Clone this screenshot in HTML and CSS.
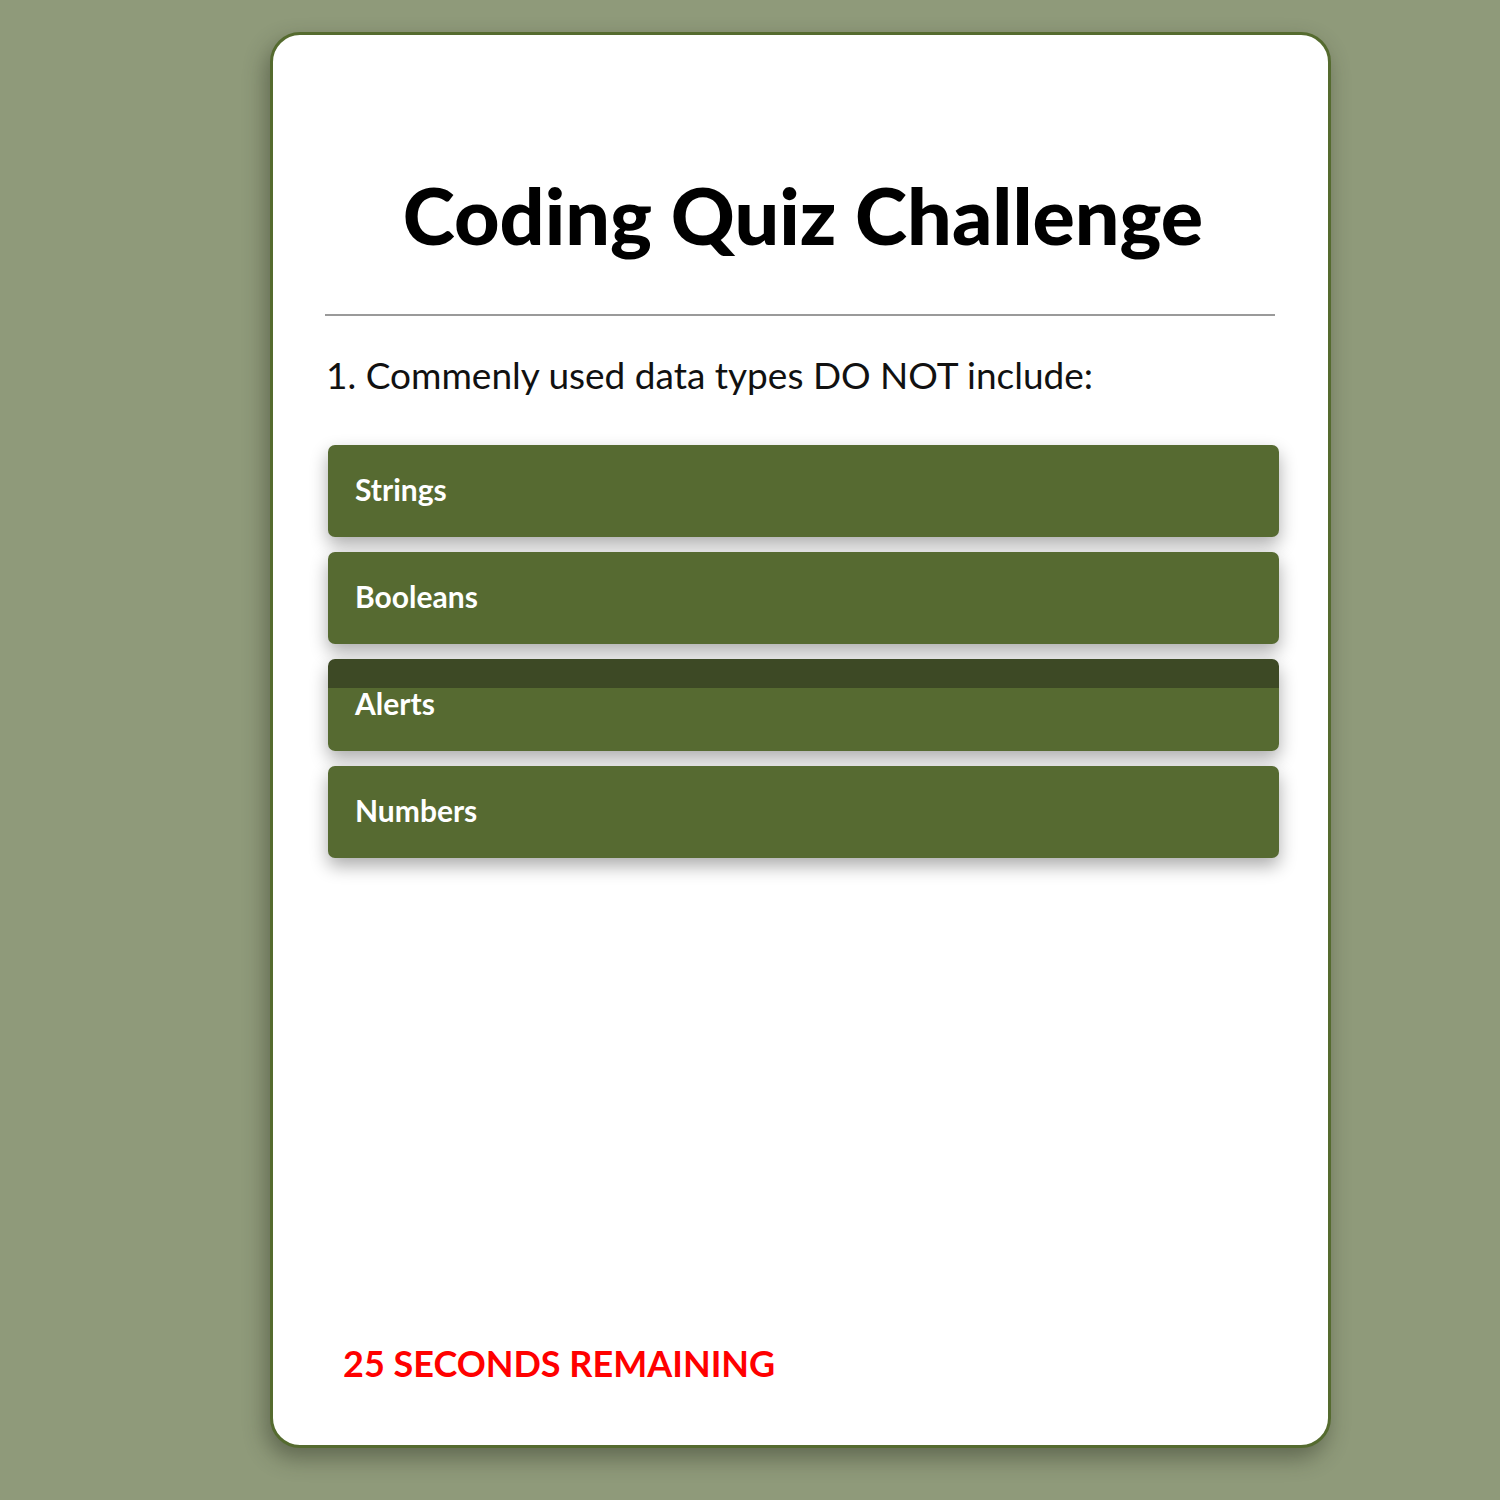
FILE: index.html
```html
<!DOCTYPE html>
<html lang="en">
<head>
<meta charset="utf-8">
<title>Coding Quiz Challenge</title>
<link rel="stylesheet" href="styles.css">
</head>
<body>
<main class="card">
  <h1 class="title">Coding Quiz Challenge</h1>
  <hr class="rule">
  <p class="question">1. Commenly used data types DO NOT include:</p>
  <div class="answers">
    <button class="answer">Strings</button>
    <button class="answer">Booleans</button>
    <button class="answer answer-hover">Alerts</button>
    <button class="answer">Numbers</button>
  </div>
  <p class="timer">25 SECONDS REMAINING</p>
</main>
</body>
</html>
```
FILE: styles.css
```css
html, body {
  margin: 0;
  padding: 0;
}
body {
  background: #8f9a7a;
  font-family: Lato, "Noto Sans", sans-serif;
  min-height: 1500px;
  padding-top: 32px;
  box-sizing: border-box;
}
.card {
  box-sizing: border-box;
  width: 1061px;
  height: 1416px;
  margin-left: 270px;
  background: #fff;
  border: 3px solid #556b2f;
  border-radius: 30px;
  box-shadow: -4px 10px 22px rgba(40, 45, 30, 0.45);
  padding: 140px 49px 0 52px;
  display: flex;
  flex-direction: column;
}
.title {
  margin: 0;
  text-align: center;
  font-size: 79px;
  font-weight: 900;
  line-height: 80px;
  color: #000;
  padding-left: 2px;
}
.rule {
  margin: 59px 4px 0 0;
  border: none;
  border-top: 2px solid #9a9a9a;
  height: 0;
}
.question {
  margin: 37px 0 0 1px;
  font-size: 37px;
  line-height: 44px;
  color: #111;
}
.answers {
  margin-top: 48px;
  display: flex;
  flex-direction: column;
  gap: 15px;
  padding-left: 3px;
}
.answer {
  height: 92px;
  border: none;
  border-radius: 7px;
  background: #566a31;
  color: #fff;
  font-family: inherit;
  font-size: 30px;
  font-weight: 700;
  text-align: left;
  padding: 0 0 4px 27px;
  box-shadow: 0 8px 18px rgba(0, 0, 0, 0.33);
}
.answer-hover {
  background: linear-gradient(#3d4925 0, #3d4925 29px, #566a31 29px);
}
.timer {
  margin: auto 0 60px 18px;
  color: #ff0000;
  font-size: 36px;
  font-weight: 700;
  line-height: 44px;
}
```
